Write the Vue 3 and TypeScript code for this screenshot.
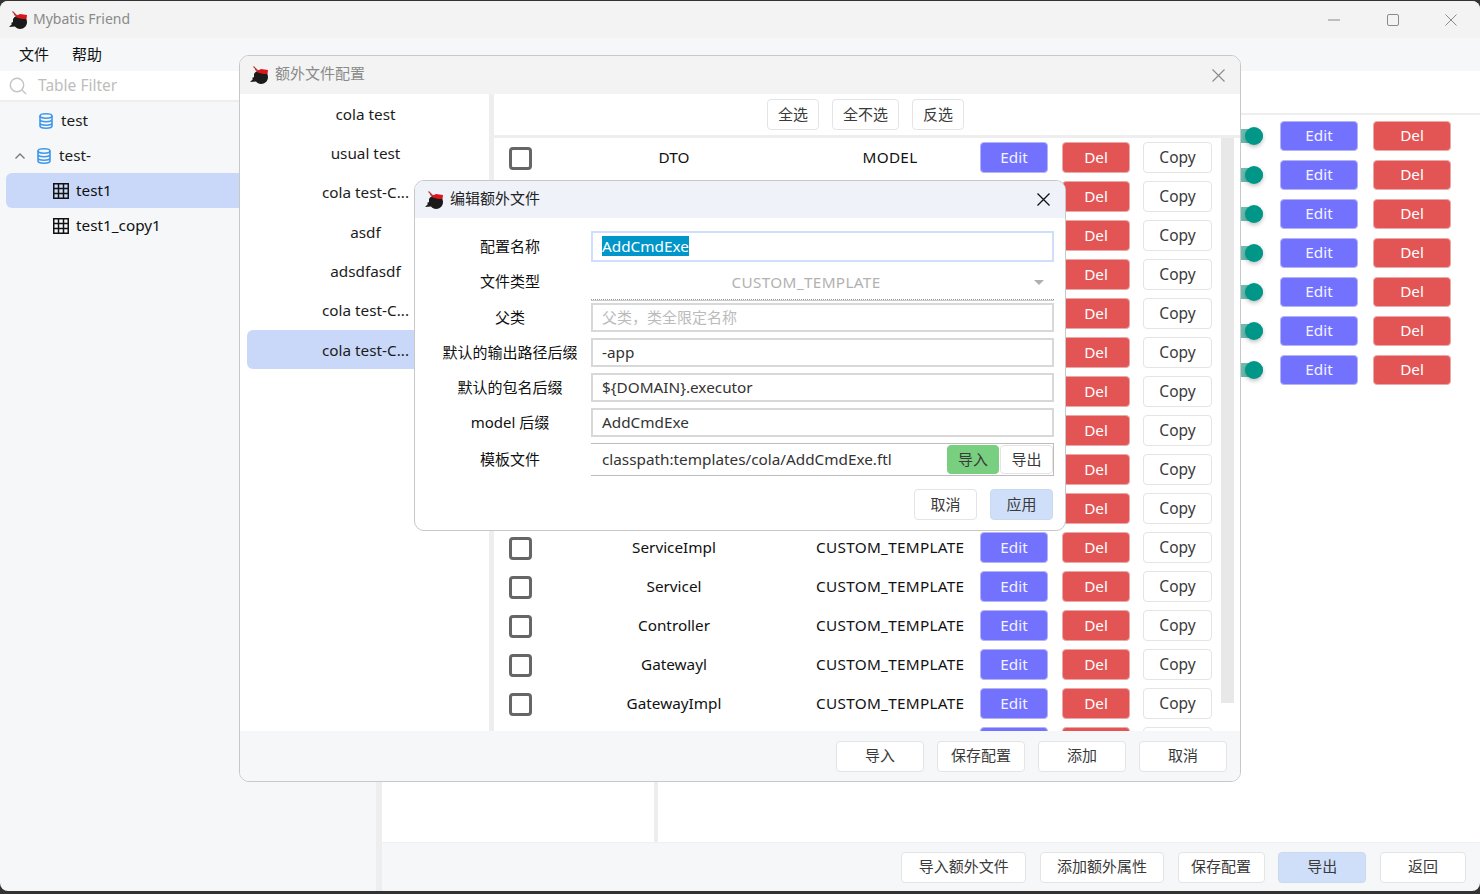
<script setup lang="ts">
interface ExtraFile { name: string; type: string; tail?: boolean }

const tables: string[] = ['test1', 'test1_copy1']
const mainRows: number[] = [1, 2, 3, 4, 5, 6, 7]
const configs: string[] = ['cola test', 'usual test', 'cola test-C...', 'asdf', 'adsdfasdf', 'cola test-C...', 'cola test-C...']
const T = 'CUSTOM_TEMPLATE'
const covered: ExtraFile[] = Array.from({ length: 9 }, () => ({ name: '', type: '' }))
const files: ExtraFile[] = [
  { name: 'DTO', type: 'MODEL' },
  ...covered,
  { name: 'ServiceImpl', type: T },
  { name: 'Servicel', type: T },
  { name: 'Controller', type: T },
  { name: 'Gatewayl', type: T },
  { name: 'GatewayImpl', type: T },
  { name: '', type: '', tail: true },
]
const fields: { label: string; value: string; placeholder?: boolean }[] = [
  { label: '父类', value: '父类，类全限定名称', placeholder: true },
  { label: '默认的输出路径后缀', value: '-app' },
  { label: '默认的包名后缀', value: '${DOMAIN}.executor' },
  { label: 'model 后缀', value: 'AddCmdExe' },
]
</script>

<template>
  <div class="window">
    <header class="titlebar">
      <svg class="logo" viewBox="0 0 20 18"><path d="M4 8c1-2 4-4 7-4 4 0 7 3 7 7s-3 7-7 7c-2 0-4-1-5-2.500L0 16l3-3-1-1 2-1z" fill="#1a1a1a"/><path d="M7 5l4-2 7 1-.5 4-4 0-6-1.500z" fill="#d8161c"/><path d="M8 5L3.500.5M8 5L5 3.500" stroke="#b33" stroke-width="1.100"/></svg>
      <span class="app-name">Mybatis Friend</span>
      <div class="win-controls">
        <svg width="12" height="12" viewBox="0 0 12 12"><path d="M0 6h12" stroke="#8a8a8a"/></svg>
        <svg width="12" height="12" viewBox="0 0 12 12"><rect x=".5" y=".5" width="11" height="11" rx="1.5" fill="none" stroke="#8a8a8a"/></svg>
        <svg width="12" height="12" viewBox="0 0 12 12"><path d="M.5.5l11 11M11.500.5l-11 11" stroke="#8a8a8a"/></svg>
      </div>
    </header>
    <nav class="menubar"><span>文件</span><span>帮助</span></nav>
    <div class="main">
      <aside class="sidebar">
        <div class="filter">
          <svg width="18" height="18" viewBox="0 0 18 18"><circle cx="8" cy="8" r="6.700" fill="none" stroke="#c4c4c4" stroke-width="1.400"/><path d="M13 13l4 4" stroke="#c4c4c4" stroke-width="1.400"/></svg>
          <span>Table Filter</span>
        </div>
        <div class="tree">
          <div class="node first">
            <svg class="db" viewBox="0 0 14 16"><ellipse cx="7" cy="3" rx="6" ry="2.200" fill="none" stroke="#3f97ec" stroke-width="1.600"/><path d="M1 3v10c0 1.300 2.700 2.200 6 2.200s6-.9 6-2.200V3M1 6.500c0 1.300 2.700 2.200 6 2.200s6-.9 6-2.200M1 10c0 1.300 2.700 2.200 6 2.200s6-.9 6-2.200" fill="none" stroke="#3f97ec" stroke-width="1.600"/></svg>
            <span>test</span>
          </div>
          <div class="node second">
            <svg class="chev" width="10" height="6" viewBox="0 0 10 6"><path d="M.5 5.500L5 1l4.500 4.500" fill="none" stroke="#777" stroke-width="1.300"/></svg>
            <svg class="db" viewBox="0 0 14 16"><ellipse cx="7" cy="3" rx="6" ry="2.200" fill="none" stroke="#3f97ec" stroke-width="1.600"/><path d="M1 3v10c0 1.300 2.700 2.200 6 2.200s6-.9 6-2.200V3M1 6.500c0 1.300 2.700 2.200 6 2.200s6-.9 6-2.200M1 10c0 1.300 2.700 2.200 6 2.200s6-.9 6-2.200" fill="none" stroke="#3f97ec" stroke-width="1.600"/></svg>
            <span>test-</span>
          </div>
          <div v-for="(t, i) in tables" :key="t" class="node node-table" :class="{ selected: i === 0 }">
            <svg width="16" height="16" viewBox="0 0 16 16"><path d="M.75.750h14.500v14.500H.75zM5.500 1v14M10.500 1v14M1 5.500h14M1 10.500h14" fill="none" stroke="#111" stroke-width="1.500"/></svg>
            <span>{{ t }}</span>
          </div>
        </div>
      </aside>
      <section class="content">
        <div class="panes">
          <div class="pane-left"></div>
          <div class="pane-right">
            <div class="pane-head"></div>
            <div v-for="r in mainRows" :key="r" class="main-row">
              <span class="switch"><i></i></span>
              <button class="btn edit wide">Edit</button>
              <button class="btn del wide">Del</button>
            </div>
          </div>
        </div>
        <footer class="bottom">
          <button class="btn w125">导入额外文件</button>
          <button class="btn w124">添加额外属性</button>
          <button class="btn w87">保存配置</button>
          <button class="btn w88 primary">导出</button>
          <button class="btn w86">返回</button>
        </footer>
      </section>
    </div>

    <div class="dialog config">
      <div class="dlg-title gray">
        <svg class="logo" viewBox="0 0 20 18"><path d="M4 8c1-2 4-4 7-4 4 0 7 3 7 7s-3 7-7 7c-2 0-4-1-5-2.500L0 16l3-3-1-1 2-1z" fill="#1a1a1a"/><path d="M7 5l4-2 7 1-.5 4-4 0-6-1.500z" fill="#d8161c"/><path d="M8 5L3.500.5M8 5L5 3.500" stroke="#b33" stroke-width="1.100"/></svg>
        <span>额外文件配置</span>
        <svg class="close" width="13" height="13" viewBox="0 0 13 13"><path d="M.5.5l12 12M12.500.5l-12 12" stroke="#8a8a8a" stroke-width="1.100"/></svg>
      </div>
      <div class="config-body">
        <ul class="config-list">
          <li v-for="(c, i) in configs" :key="i" :class="{ selected: i === 6 }"><span>{{ c }}</span></li>
        </ul>
        <div class="files">
          <div class="toolbar">
            <button class="btn w52">全选</button>
            <button class="btn w67">全不选</button>
            <button class="btn w52">反选</button>
          </div>
          <div class="file-rows">
            <div v-for="(f, i) in files" :key="i" class="file-row">
              <span class="check"></span>
              <span class="file-name">{{ f.name }}</span>
              <span class="file-type">{{ f.type }}</span>
              <button class="btn edit">{{ f.name ? 'Edit' : '' }}</button>
              <button class="btn del">{{ f.tail ? '' : 'Del' }}</button>
              <button class="btn copy">{{ f.tail ? '' : 'Copy' }}</button>
            </div>
            <div class="scrollbar"></div>
          </div>
        </div>
      </div>
      <div class="dlg-foot">
        <button class="btn w88">导入</button>
        <button class="btn w88">保存配置</button>
        <button class="btn w88">添加</button>
        <button class="btn w88">取消</button>
      </div>
    </div>

    <div class="dialog editor">
      <div class="dlg-title blue">
        <svg class="logo" viewBox="0 0 20 18"><path d="M4 8c1-2 4-4 7-4 4 0 7 3 7 7s-3 7-7 7c-2 0-4-1-5-2.500L0 16l3-3-1-1 2-1z" fill="#1a1a1a"/><path d="M7 5l4-2 7 1-.5 4-4 0-6-1.500z" fill="#d8161c"/><path d="M8 5L3.500.5M8 5L5 3.500" stroke="#b33" stroke-width="1.100"/></svg>
        <span>编辑额外文件</span>
        <svg class="close" width="13" height="13" viewBox="0 0 13 13"><path d="M.5.5l12 12M12.500.5l-12 12" stroke="#111" stroke-width="1.300"/></svg>
      </div>
      <div class="form">
        <div class="form-row r-name">
          <label>配置名称</label>
          <div class="field focus"><span class="sel">AddCmdExe</span></div>
        </div>
        <div class="form-row r-type">
          <label>文件类型</label>
          <div class="select"><span>CUSTOM_TEMPLATE</span><i class="arrow"></i></div>
        </div>
        <div v-for="f in fields" :key="f.label" class="form-row r-text">
          <label>{{ f.label }}</label>
          <div class="field" :class="{ ph: f.placeholder }">{{ f.value }}</div>
        </div>
        <div class="form-row r-tpl">
          <label>模板文件</label>
          <div class="tpl">
            <span class="tpl-text">classpath:templates/cola/AddCmdExe.ftl</span>
            <button class="btn tiny green">导入</button>
            <button class="btn tiny">导出</button>
          </div>
        </div>
        <div class="form-foot">
          <button class="btn w63">取消</button>
          <button class="btn w63 primary">应用</button>
        </div>
      </div>
    </div>
  </div>
</template>

<style>
html, body { margin: 0; background: #333; overflow: hidden; }
</style>

<style scoped>
.window {
  position: relative;
  width: 1480px;
  height: 890px;
  margin-top: 1px;
  display: flex;
  flex-direction: column;
  background: #f5f7f9;
  border-radius: 8px;
  overflow: hidden;
  color: #1c1c1c;
  font: 15px/20px "Noto Sans", "Noto Sans CJK SC", sans-serif;
}
.titlebar { height: 37px; flex: none; display: flex; align-items: center; padding-left: 9px; background: #f3f3f3; }
.logo { width: 20px; height: 18px; flex: none; }
.app-name { margin-left: 4px; padding-bottom: 2px; color: #8a8a8a; font-size: 14px; }
.win-controls { margin-left: auto; display: flex; gap: 46.500px; padding-right: 23px; }
.menubar { height: 33px; box-sizing: border-box; padding-bottom: 2px; flex: none; display: flex; align-items: center; gap: 23px; padding-left: 19px; color: #111; }
.main { flex: 1; display: flex; min-height: 0; }
.sidebar { width: 376px; flex: none; display: flex; flex-direction: column; }
.filter { height: 29px; flex: none; display: flex; align-items: center; gap: 11px; padding-left: 9px; background: #fff; border-bottom: 2px solid #eee; color: #bdbdbd; font-size: 15.500px; }
.filter span { padding-bottom: 2px; }
.tree { padding-top: 1px; font-size: 15.300px; }
.node { height: 35px; display: flex; align-items: center; }
.node span { padding-bottom: 2px; }
.node.first { padding-left: 39px; gap: 8px; }
.node.second { padding-left: 15px; }
.node.second .db { margin-left: 12px; margin-right: 8px; }
.db { width: 14px; height: 16px; }
.node-table { margin-left: 6px; padding-left: 47px; gap: 7px; color: #111; border-radius: 6px 0 0 6px; }
.node-table.selected { background: #c9d8f8; }
.content { flex: 1; min-width: 0; display: flex; flex-direction: column; border-left: 6px solid #eee; }
.panes { flex: 1; display: flex; min-height: 0; background: #fff; }
.pane-left { width: 272px; flex: none; border-right: 4px solid #eee; }
.pane-right { flex: 1; min-width: 0; }
.pane-head { height: 42px; margin-bottom: 1px; border-bottom: 2px solid #eee; }
.main-row { height: 39px; display: flex; align-items: center; justify-content: flex-end; padding-right: 29px; }
.switch { position: relative; width: 40px; height: 14px; margin-right: 17px; background: #6dbcb0; border-radius: 7px; }
.switch i { position: absolute; right: 0; top: -2px; width: 18px; height: 18px; border-radius: 50%; background: #009688; box-shadow: 0 2px 4px rgba(0, 0, 0, .25); }
.bottom { height: 48px; flex: none; display: flex; justify-content: flex-end; align-items: center; gap: 13.700px; padding-right: 14px; border-top: 1px solid #f0f0f0; }

.btn {
  height: 31px;
  padding: 0 0 2px;
  box-sizing: border-box;
  background: #fff;
  border: 1px solid #e4e4e4;
  border-radius: 4px;
  color: #3a3a3a;
  font: inherit;
}
.btn.edit { background: #7272ff; border-color: #b4b4f4; color: #f3f3ff; width: 68px; font-size: 15.300px; }
.btn.del { background: #e35555; border-color: #e9a9a9; color: #fff; width: 68px; margin-left: 14px; font-size: 15.300px; }
.btn.wide { width: 78px; height: 30px; }
.main-row .btn.del { margin-left: 15px; }
.btn.copy { width: 69px; margin-left: 13px; font-size: 15.500px; }
.btn.primary { background: #cfdffa; border-color: #cbd9ee; }
.btn.green { background: #77cf7f; border-color: #77cf7f; }
.w125 { width: 125px; } .w124 { width: 124px; } .w87 { width: 87px; } .w88 { width: 88px; } .w86 { width: 86px; }
.w52 { width: 52px; } .w67 { width: 67px; } .w63 { width: 63px; }

.dialog { position: absolute; box-sizing: border-box; display: flex; flex-direction: column; background: #fff; border: 1px solid #c8c8c8; overflow: hidden; border-radius: 10px; }
.dialog.config { left: 239px; top: 54px; width: 1002px; height: 727px; }
.dialog.editor { left: 414px; top: 179px; width: 652px; height: 351px; }
.dlg-title { flex: none; height: 38px; display: flex; align-items: center; padding-left: 10px; }
.dlg-title span { margin-left: 5px; padding-bottom: 4px; }
.dlg-title .close { margin-left: auto; margin-right: 15px; }
.dlg-title.gray { background: #f3f3f3; color: #8a8a8a; }
.dlg-title.blue { background: #eff2f9; color: #222; height: 37px; }
.config-body { flex: 1; display: flex; min-height: 0; }
.config-list { flex: none; margin: 0; padding: 0 0 0 7px; box-sizing: border-box; list-style: none; border-right: 5px solid #eee; width: 254px; font-size: 15.300px; }
.config-list li { height: 39.330px; display: flex; align-items: center; justify-content: center; padding-right: 5px; border-radius: 6px; color: #1c1c1c; }
.config-list li.selected { background: #c9d8f8; }
.files { flex: 1; min-width: 0; display: flex; flex-direction: column; }
.toolbar { flex: none; height: 41px; display: flex; justify-content: center; align-items: center; gap: 13px; padding-right: 3px; border-bottom: 3px solid #eee; }
.file-rows { position: relative; flex: 1; overflow: hidden; min-height: 0; }
.file-row { height: 39px; display: flex; align-items: center; padding-left: 15px; font-size: 15.300px; }
.check { width: 23px; height: 23px; flex: none; box-sizing: border-box; margin-top: 2px; border: 3px solid #666; border-radius: 4px; }
.file-name { width: 284px; flex: none; padding-bottom: 2px; text-align: center; color: #111; }
.file-type { width: 148px; flex: none; padding-bottom: 2px; text-align: center; color: #111; white-space: nowrap; margin-right: 16px; letter-spacing: .3px; }
.scrollbar { position: absolute; right: 6px; top: 0; width: 13px; height: 565px; background: #e8e8e8; }
.dlg-foot { flex: none; height: 50px; display: flex; justify-content: flex-end; align-items: center; gap: 13px; padding-right: 13px; background: #f5f7f9; }

.form { padding: 13px 11px 0 16px; }
.form-row { display: flex; align-items: center; margin-top: 6px; }
.form-row label { width: 158px; flex: none; margin-right: 2px; padding-bottom: 2px; text-align: center; color: #111; }
.r-name { margin-top: 0; height: 31px; }
.r-type { margin-top: 1px; height: 37px; }
.r-text { height: 29px; }
.r-type + .r-text { margin-top: 3px; }
.r-tpl { height: 33px; }
.field { flex: 1; height: 100%; box-sizing: border-box; display: flex; align-items: center; padding: 0 0 2px 9px; border: 2px solid #d8d8d8; color: #333; white-space: pre; font-size: 15.300px; }
.field.focus { border-color: #cfdffb; }
.field.ph { color: #bbb; font-size: 15px; }
.sel { background: #0096c9; color: #fff; }
.select { flex: 1; height: 100%; box-sizing: border-box; position: relative; display: flex; align-items: center; justify-content: center; padding: 2px 33px 0 0; border-bottom: 1px dotted #999; box-shadow: 0 1px 0 #ccc; color: #b2b2b2; font-size: 15.300px; letter-spacing: .35px; }
.arrow { position: absolute; right: 10px; top: 17px; border: 5px solid transparent; border-top-color: #b0b0b0; border-bottom-width: 0; }
.tpl { flex: 1; height: 100%; box-sizing: border-box; display: flex; align-items: center; padding-left: 11px; border-top: 1px solid #bdbdbd; border-bottom: 1px solid #bdbdbd; border-right: 1px solid #bdbdbd; color: #333; }
.tpl-text { flex: 1; padding-bottom: 2px; font-size: 15.300px; }
.btn.tiny { width: 53px; height: 29px; }
.btn.tiny.green { width: 52px; margin-right: 1px; }
.form-foot { display: flex; justify-content: flex-end; gap: 13px; margin: 13px 1px 0 0; }
</style>
